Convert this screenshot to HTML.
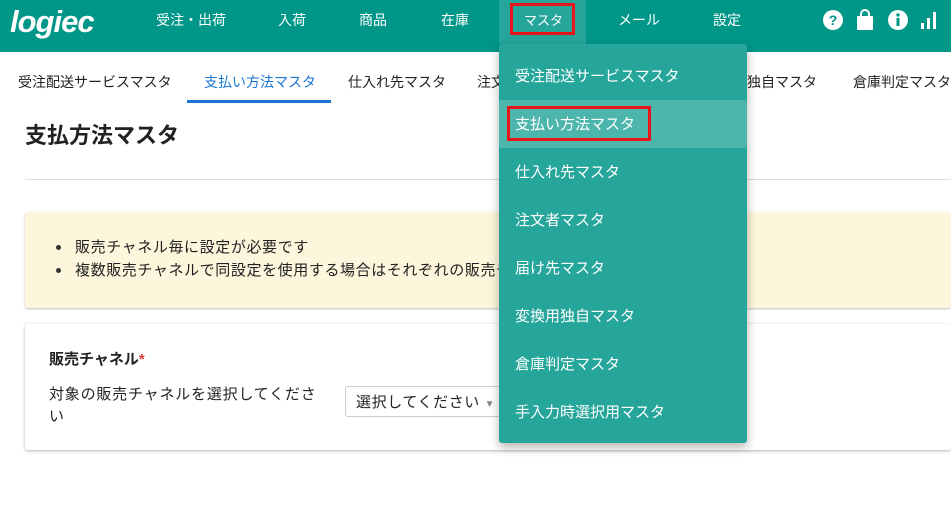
<!DOCTYPE html>
<html><head><meta charset="utf-8"><style>
*{margin:0;padding:0;box-sizing:border-box}
body{width:951px;height:513px;overflow:hidden;background:#fff;font-family:"Liberation Sans","Noto Sans CJK JP",sans-serif;color:#222;position:relative}
.hdr{position:absolute;left:0;top:0;width:951px;height:52px;background:#009688}
.logo{position:absolute;left:10px;top:4px;color:#fff;font:italic bold 31px "Liberation Sans",sans-serif;letter-spacing:-1px}
.nav{position:absolute;top:10px;color:#fff;font-size:14px}
.mact{position:absolute;left:499px;top:0;width:87px;height:44px;background:#26a69a}
.red{position:absolute;border:3px solid #e8141c}
.tabs{position:absolute;top:52px;left:0;width:951px;height:51px}
.tab{position:absolute;top:20px;font-size:14px;color:#222}
.ul{position:absolute;left:187px;top:100px;width:144px;height:3px;background:#1976d2}
h1{position:absolute;left:25px;top:118px;font-size:22px;font-weight:bold}
.hr{position:absolute;left:25px;top:179px;width:926px;height:1px;background:#ddd}
.warn{position:absolute;left:25px;top:212px;width:926px;height:96px;background:#fdf6dc;box-shadow:0 1px 2px rgba(0,0,0,.25);border-radius:3px}
.warn li{position:absolute;left:50px;font-size:15px;list-style:none;letter-spacing:0.6px}
.warn li:before{content:"";position:absolute;left:-19px;top:9px;width:5px;height:5px;border-radius:50%;background:#333}
.card{position:absolute;left:25px;top:324px;width:926px;height:126px;background:#fff;box-shadow:0 1px 3px rgba(0,0,0,.3);border-radius:3px}
.menu{position:absolute;left:499px;top:44px;width:248px;height:399px;background:#26a69a;border-radius:3px;box-shadow:0 4px 10px rgba(0,0,0,.3)}
.mi{position:absolute;left:16px;color:#fff;font-size:15px}
.hl{position:absolute;left:0;top:56px;width:248px;height:48px;background:#4db6ac;border-radius:3px}
.ic{position:absolute;top:9px}
</style></head><body>
<div class="hdr">
<div class="logo">logiec</div>
<div class="mact"></div>
<div class="nav" style="left:156px">受注・出荷</div>
<div class="nav" style="left:278px">入荷</div>
<div class="nav" style="left:359px">商品</div>
<div class="nav" style="left:441px">在庫</div>
<div class="nav" style="left:524px;font-size:13px">マスタ</div>
<div class="nav" style="left:618px">メール</div>
<div class="nav" style="left:713px">設定</div>
<svg class="ic" style="left:822px" width="22" height="22" viewBox="0 0 22 22"><circle cx="11" cy="11" r="10" fill="#fff"/><text x="11" y="16" text-anchor="middle" font-size="14" font-weight="bold" fill="#009688" font-family="Liberation Sans">?</text></svg>
<svg class="ic" style="left:856px" width="18" height="22" viewBox="0 0 18 22"><path d="M5 7V5a4 4 0 0 1 8 0v2" stroke="#fff" stroke-width="2" fill="none"/><rect x="1" y="7" width="16" height="14" rx="1" fill="#fff"/></svg>
<svg class="ic" style="left:887px" width="22" height="22" viewBox="0 0 22 22"><circle cx="11" cy="11" r="10" fill="#fff"/><rect x="9.5" y="9" width="3" height="8" fill="#009688"/><circle cx="11" cy="6" r="1.7" fill="#009688"/></svg>
<svg class="ic" style="left:920px" width="18" height="22" viewBox="0 0 18 22"><rect x="1" y="14" width="3" height="6" fill="#fff"/><rect x="7" y="9" width="3" height="11" fill="#fff"/><rect x="13" y="3" width="3" height="17" fill="#fff"/></svg>
</div>
<div class="red" style="left:510px;top:3px;width:65px;height:32px"></div>
<div class="tabs">
<div class="tab" style="left:18px">受注配送サービスマスタ</div>
<div class="tab" style="left:204px;color:#1976d2">支払い方法マスタ</div>
<div class="tab" style="left:348px">仕入れ先マスタ</div>
<div class="tab" style="left:477px">注文者マスタ</div>
<div class="tab" style="left:733px">用独自マスタ</div>
<div class="tab" style="left:853px">倉庫判定マスタ</div>
</div>
<div class="ul"></div>
<h1>支払方法マスタ</h1>
<div class="hr"></div>
<div class="warn">
<li style="top:24px">販売チャネル毎に設定が必要です</li>
<li style="top:47px">複数販売チャネルで同設定を使用する場合はそれぞれの販売チャネルで設定が必要です</li>
</div>
<div class="card">
<div style="position:absolute;left:24px;top:24px;font-size:15px;font-weight:bold">販売チャネル<span style="color:#e53935">*</span></div>
<div style="position:absolute;left:24px;top:60px;font-size:15px;width:278px;line-height:22px;letter-spacing:0.8px">対象の販売チャネルを選択してください</div>
<div style="position:absolute;left:320px;top:62px;width:180px;height:31px;border:1px solid #ccc;border-radius:3px;font-size:15px;padding:4px 10px;letter-spacing:0.6px">選択してください <span style="color:#888;font-size:10px">▼</span></div>
</div>
<div class="menu">
<div class="hl"></div>
<div class="mi" style="top:21px">受注配送サービスマスタ</div>
<div class="mi" style="top:69px">支払い方法マスタ</div>
<div class="mi" style="top:117px">仕入れ先マスタ</div>
<div class="mi" style="top:165px">注文者マスタ</div>
<div class="mi" style="top:213px">届け先マスタ</div>
<div class="mi" style="top:261px">変換用独自マスタ</div>
<div class="mi" style="top:309px">倉庫判定マスタ</div>
<div class="mi" style="top:357px">手入力時選択用マスタ</div>
</div>
<div class="red" style="left:507px;top:106px;width:144px;height:35px"></div>
</body></html>
